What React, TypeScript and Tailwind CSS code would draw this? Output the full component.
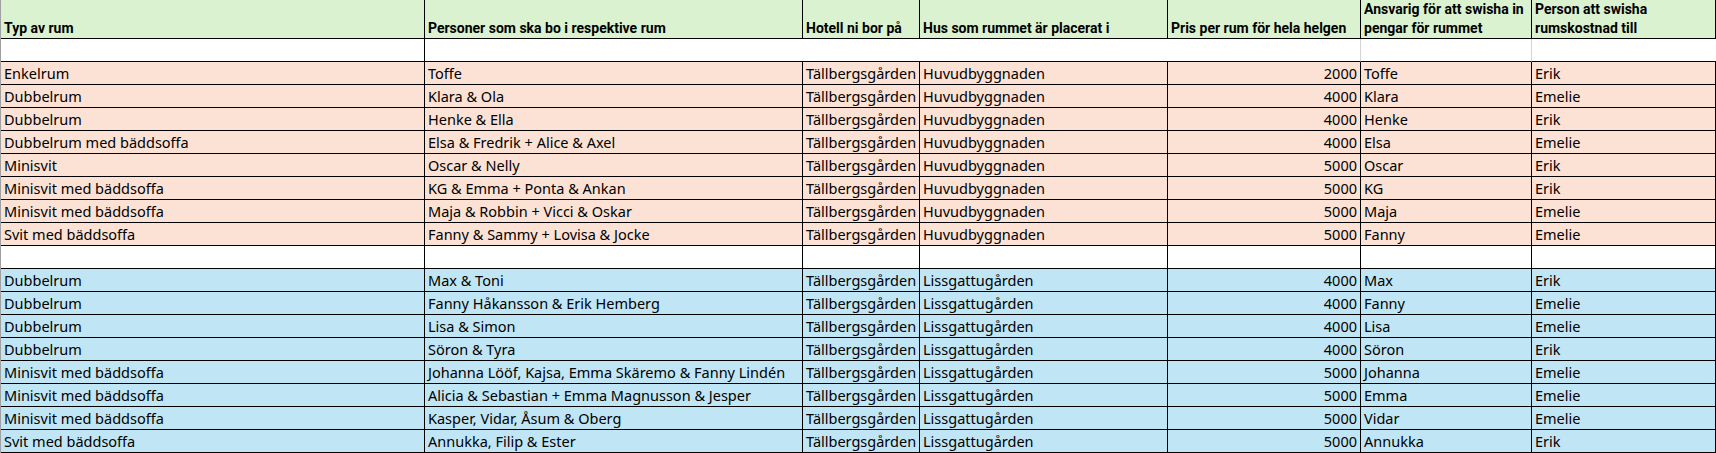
import React from 'react';

type Row = [string, string, string, string, string, string, string];

const colWidths = ['w-[424px]', 'w-[378px]', 'w-[117px]', 'w-[248px]', 'w-[193px]', 'w-[171px]', 'flex-1'];

const headers = [
  'Typ av rum',
  'Personer som ska bo i respektive rum',
  'Hotell ni bor på',
  'Hus som rummet är placerat i',
  'Pris per rum för hela helgen',
  'Ansvarig för att swisha in pengar för rummet',
  'Person att swisha rumskostnad till'
];

const mainBuilding: Row[] = [
  ['Enkelrum', 'Toffe', 'Tällbergsgården', 'Huvudbyggnaden', '2000', 'Toffe', 'Erik'],
  ['Dubbelrum', 'Klara & Ola', 'Tällbergsgården', 'Huvudbyggnaden', '4000', 'Klara', 'Emelie'],
  ['Dubbelrum', 'Henke & Ella', 'Tällbergsgården', 'Huvudbyggnaden', '4000', 'Henke', 'Erik'],
  ['Dubbelrum med bäddsoffa', 'Elsa & Fredrik + Alice & Axel', 'Tällbergsgården', 'Huvudbyggnaden', '4000', 'Elsa', 'Emelie'],
  ['Minisvit', 'Oscar & Nelly', 'Tällbergsgården', 'Huvudbyggnaden', '5000', 'Oscar', 'Erik'],
  ['Minisvit med bäddsoffa', 'KG & Emma + Ponta & Ankan', 'Tällbergsgården', 'Huvudbyggnaden', '5000', 'KG', 'Erik'],
  ['Minisvit med bäddsoffa', 'Maja & Robbin + Vicci & Oskar', 'Tällbergsgården', 'Huvudbyggnaden', '5000', 'Maja', 'Emelie'],
  ['Svit med bäddsoffa', 'Fanny & Sammy + Lovisa & Jocke', 'Tällbergsgården', 'Huvudbyggnaden', '5000', 'Fanny', 'Emelie']
];

const lissgattu: Row[] = [
  ['Dubbelrum', 'Max & Toni', 'Tällbergsgården', 'Lissgattugården', '4000', 'Max', 'Erik'],
  ['Dubbelrum', 'Fanny Håkansson & Erik Hemberg', 'Tällbergsgården', 'Lissgattugården', '4000', 'Fanny', 'Emelie'],
  ['Dubbelrum', 'Lisa & Simon', 'Tällbergsgården', 'Lissgattugården', '4000', 'Lisa', 'Emelie'],
  ['Dubbelrum', 'Söron & Tyra', 'Tällbergsgården', 'Lissgattugården', '4000', 'Söron', 'Erik'],
  ['Minisvit med bäddsoffa', 'Johanna Lööf, Kajsa, Emma Skäremo & Fanny Lindén', 'Tällbergsgården', 'Lissgattugården', '5000', 'Johanna', 'Emelie'],
  ['Minisvit med bäddsoffa', 'Alicia & Sebastian + Emma Magnusson & Jesper', 'Tällbergsgården', 'Lissgattugården', '5000', 'Emma', 'Emelie'],
  ['Minisvit med bäddsoffa', 'Kasper, Vidar, Åsum & Oberg', 'Tällbergsgården', 'Lissgattugården', '5000', 'Vidar', 'Emelie'],
  ['Svit med bäddsoffa', 'Annukka, Filip & Ester', 'Tällbergsgården', 'Lissgattugården', '5000', 'Annukka', 'Erik']
];

const DataRow = ({ row, bg }: { row: Row; bg: string }) => (
  <div className={`flex h-[23px] ${bg}`}>
    {row.map((value, i) => (
      <div
        key={i}
        className={`${colWidths[i]} shrink-0 flex items-end overflow-hidden whitespace-nowrap border-r border-b border-black px-[3px] pb-[1px] leading-[20px] ${i === 4 ? 'justify-end' : ''}`}
      >
        {value}
      </div>
    ))}
  </div>
);

export default function App() {
  return (
    <div className="w-[1716px] h-[453px] overflow-hidden bg-white border-l border-[#a0a0a0] text-[14.5px] text-black font-['Noto_Sans',sans-serif]">
      {/* header */}
      <div className="flex h-[39px] bg-[#daf2d0] text-[14px] font-['Roboto',sans-serif] font-bold">
        {headers.map((h, i) => (
          <div
            key={i}
            className={`${colWidths[i]} shrink-0 flex items-end overflow-hidden border-r border-b border-black px-[3px] leading-[19px] ${i >= 5 ? 'whitespace-normal' : 'whitespace-nowrap'}`}
          >
            <span>{h}</span>
          </div>
        ))}
      </div>

      {/* empty spacer row */}
      <div className="flex h-[23px] bg-white">
        <div className="w-[424px] shrink-0 border-r border-b border-black" />
        <div className="w-[378px] shrink-0 border-b border-black" />
        <div className="w-[117px] shrink-0 border-b border-black" />
        <div className="w-[248px] shrink-0 border-b border-black" />
        <div className="w-[193px] shrink-0 border-r border-b border-r-[#d4d4d4] border-b-black" />
        <div className="w-[171px] shrink-0 border-r border-b border-r-[#d4d4d4] border-b-black" />
        <div className="flex-1 border-b border-black" />
      </div>

      {mainBuilding.map((r, i) => (
        <DataRow key={`m${i}`} row={r} bg="bg-[#fbe2d5]" />
      ))}

      <div className="flex h-[23px] bg-white">
        {colWidths.map((w, i) => (
          <div key={i} className={`${w} shrink-0 border-r border-b border-black`} />
        ))}
      </div>

      {lissgattu.map((r, i) => (
        <DataRow key={`l${i}`} row={r} bg="bg-[#c0e6f5]" />
      ))}
    </div>
  );
}
